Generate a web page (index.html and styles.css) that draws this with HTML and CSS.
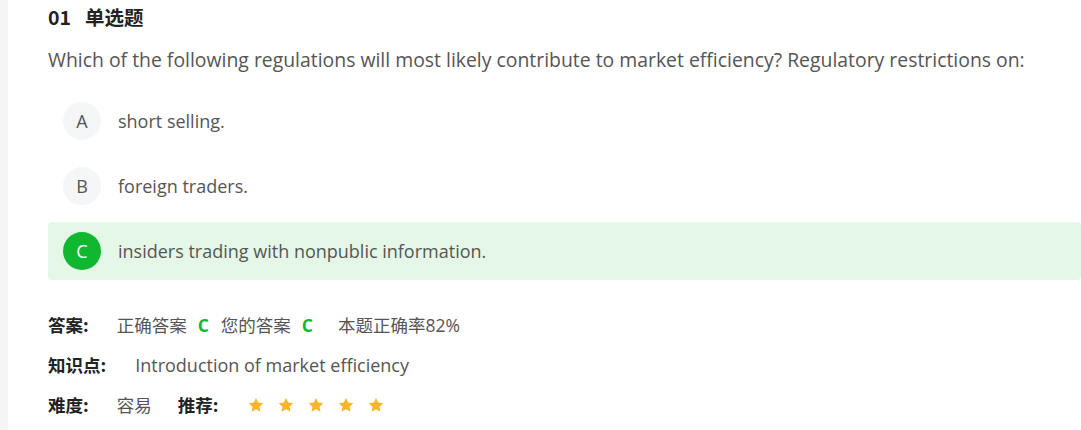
FILE: index.html
```html
<!DOCTYPE html>
<html>
<head>
<meta charset="utf-8">
<link rel="stylesheet" href="styles.css">
</head>
<body>
<div class="page">
  <aside class="strip"></aside>
  <main class="content">
    <h2 class="title"><span class="num">01</span><span>单选题</span></h2>
    <p class="question">Which of the following regulations will most likely contribute to market efficiency? Regulatory restrictions on:</p>
    <ul class="options">
      <li class="option"><span class="letter">A</span><span class="otext">short selling.</span></li>
      <li class="option"><span class="letter">B</span><span class="otext">foreign traders.</span></li>
      <li class="option correct"><span class="letter">C</span><span class="otext">insiders trading with nonpublic information.</span></li>
    </ul>
    <div class="meta">
      <div class="row">
        <span class="label">答案:</span>
        <span class="val">正确答案</span><span class="ans">C</span>
        <span class="val">您的答案</span><span class="ans">C</span>
        <span class="val rate">本题正确率82%</span>
      </div>
      <div class="row">
        <span class="label">知识点:</span>
        <span class="val kp">Introduction of market efficiency</span>
      </div>
      <div class="row">
        <span class="label">难度:</span>
        <span class="val diff">容易</span>
        <span class="label">推荐:</span>
        <span class="stars">
          <svg class="star" viewBox="0 0 24 24"><path d="M12 2.5l2.9 6.2 6.8.8-5 4.7 1.3 6.7L12 17.6 6 20.9l1.3-6.7-5-4.7 6.8-.8z"/></svg>
          <svg class="star" viewBox="0 0 24 24"><path d="M12 2.5l2.9 6.2 6.8.8-5 4.7 1.3 6.7L12 17.6 6 20.9l1.3-6.7-5-4.7 6.8-.8z"/></svg>
          <svg class="star" viewBox="0 0 24 24"><path d="M12 2.5l2.9 6.2 6.8.8-5 4.7 1.3 6.7L12 17.6 6 20.9l1.3-6.7-5-4.7 6.8-.8z"/></svg>
          <svg class="star" viewBox="0 0 24 24"><path d="M12 2.5l2.9 6.2 6.8.8-5 4.7 1.3 6.7L12 17.6 6 20.9l1.3-6.7-5-4.7 6.8-.8z"/></svg>
          <svg class="star" viewBox="0 0 24 24"><path d="M12 2.5l2.9 6.2 6.8.8-5 4.7 1.3 6.7L12 17.6 6 20.9l1.3-6.7-5-4.7 6.8-.8z"/></svg>
        </span>
      </div>
    </div>
  </main>
</div>
</body>
</html>
```
FILE: styles.css
```css
* { box-sizing: border-box; }
html, body { margin: 0; padding: 0; background: #fff; }
body {
  font-family: "Open Sans", "Noto Sans CJK SC", sans-serif;
  color: #555;
  width: 1081px;
  height: 430px;
  overflow: hidden;
}
.page { display: flex; height: 430px; }
.strip { width: 8px; background: #f5f5f6; flex: none; }
.content { flex: 1; padding-left: 40px; padding-top: 4px; }
.title {
  margin: 0;
  font-family: "Noto Sans CJK SC", sans-serif;
  font-size: 19.5px;
  font-weight: 700;
  color: #222;
  line-height: 26px;
  display: flex;
  gap: 14px;
}
.question {
  margin: 17px 0 0;
  font-size: 19.4px;
  line-height: 26px;
  color: #555;
}
.options { list-style: none; margin: 19px 0 0; padding: 0; }
.option {
  display: flex;
  align-items: center;
  height: 58px;
  margin-bottom: 7px;
  padding-left: 15px;
  border-radius: 4px;
}
.letter {
  width: 38px; height: 38px;
  border-radius: 50%;
  background: #f5f6f7;
  color: #555;
  display: flex; align-items: center; justify-content: center;
  font-size: 18px;
  flex: none;
}
.otext { margin-left: 17px; font-size: 18px; color: #555; }
.correct { background: #e5f8e8; }
.correct .letter { background: #10b832; color: #fff; }
.meta { margin-top: 25px; }
.row {
  display: flex;
  align-items: center;
  height: 40px;
  font-size: 17.5px;
  line-height: 24px;
}
.label { font-family: "Noto Sans CJK SC", sans-serif; font-weight: 700; color: #222; margin-right: 28px; }
.val { color: #555; }
.ans { color: #10b832; font-weight: 700; margin: 0 12px 0 11px; }
.rate { margin-left: 13px; }
.kp { font-size: 18px; margin-left: 1px; }
.diff { margin-right: 26px; }
.stars { display: flex; gap: 12px; margin-left: 1px; }
.star { width: 18px; height: 18px; fill: #f7b52c; }
```
